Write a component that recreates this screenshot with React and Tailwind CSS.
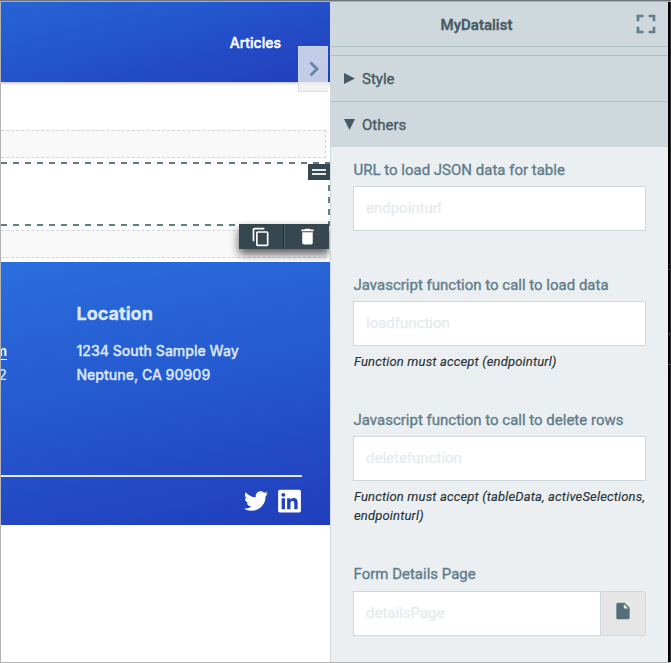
import { FaTwitter, FaLinkedin } from "react-icons/fa";
import {
  MdFullscreen,
  MdDelete,
  MdContentCopy,
  MdInsertDriveFile,
} from "react-icons/md";

const DASH_X =
  "bg-[repeating-linear-gradient(90deg,#607d8b_0_6.5px,transparent_6.5px_12px)]";
const DASH_Y =
  "bg-[repeating-linear-gradient(180deg,#607d8b_0_6px,transparent_6px_12px)]";

function DropZone() {
  return (
    <div className="h-[28px] w-[325px] shrink-0 border border-l-0 border-dashed border-[#d2d6d6] bg-[#f9f9f9]" />
  );
}

function SelectedRow() {
  return (
    <div className="relative mt-1 h-16 shrink-0">
      <div className={`absolute inset-x-0 top-0 h-0.5 ${DASH_X}`} />
      <div className={`absolute inset-x-0 bottom-0 h-0.5 ${DASH_X}`} />
      <div className={`absolute top-[23px] right-0 bottom-0 w-0.5 ${DASH_Y}`} />
      <div className="absolute top-0.5 right-0 flex h-4 w-[22px] flex-col items-center justify-center gap-0.5 bg-[#37474f]">
        <span className="h-0.5 w-3.5 bg-[#e4e8ea]" />
        <span className="h-0.5 w-3.5 bg-[#e4e8ea]" />
      </div>
      <div className="absolute top-[62px] right-px z-10 flex h-[25px] w-[90px] bg-[#37474f] text-white shadow-[0_5px_10px_rgba(0,0,0,0.65)]">
        <div className="flex w-[45px] items-center justify-center border-r border-[#263238]">
          <MdContentCopy className="size-5" />
        </div>
        <div className="flex w-[45px] items-center justify-center border-l border-[#46606a]">
          <MdDelete className="size-[21px]" />
        </div>
      </div>
    </div>
  );
}

function PagePreview() {
  return (
    <div className="relative flex w-[330px] shrink-0 flex-col overflow-hidden border-l border-[#b4b4b4] bg-white font-[Inter,sans-serif]">
      <header className="flex h-20 shrink-0 items-center justify-end bg-[linear-gradient(165deg,#2764d4_0%,#2457cd_38%,#2348c4_72%,#213fbc_100%)] pr-[49px] shadow-[0_1px_3px_rgba(0,0,0,0.3)]">
        <span className="text-[14px] font-medium text-white [-webkit-text-stroke:0.4px]">Articles</span>
      </header>
      <div className="absolute top-11 right-[2px] flex h-[46px] w-[30px] items-center justify-center border border-r-0 border-[#cfd8dc]/70 bg-[#eceff1]/80">
        <svg viewBox="0 0 10 16" className="h-4 w-2.5" fill="none" stroke="#6485a6" strokeWidth="2.8">
          <path d="M1.5 1.500 8 8l-6.500 6.500" />
        </svg>
      </div>
      <div className="mt-12 flex shrink-0 flex-col">
        <DropZone />
        <SelectedRow />
        <div className="mt-1 flex">
          <DropZone />
        </div>
      </div>
      <footer className="mt-1 flex h-[263px] shrink-0 flex-col bg-[linear-gradient(168deg,#2a6edd_0%,#2559cf_48%,#2348c4_78%,#203ebb_100%)] text-[#dfe8f9]">
        <div className="flex h-[213px]">
          <div className="flex w-1.5 flex-col items-end pt-[77px] text-[14px] leading-6">
            <span className="font-semibold text-white underline underline-offset-[3px]">m</span>
            <span className="font-medium">2</span>
          </div>
          <div className="pt-9 pl-[69.5px] text-[14px] leading-6 font-medium tracking-[0.03px] [-webkit-text-stroke:0.3px]">
            <h3 className="mb-[10px] text-[18px] leading-[31px] font-bold">Location</h3>
            <p>1234 South Sample Way</p>
            <p>Neptune, CA 90909</p>
          </div>
        </div>
        <div className="h-0.5 w-[301px] bg-[#e4e9f8]" />
        <div className="flex w-[300px] items-center justify-end gap-[10px] pt-[11px] text-white">
          <FaTwitter className="size-6" />
          <FaLinkedin className="h-[26px] w-[23px]" />
        </div>
      </footer>
    </div>
  );
}

function Label({ children }) {
  return (
    <div className="h-6 pl-[0.5px] text-[15px] leading-6 whitespace-nowrap text-[#607d8b] [-webkit-text-stroke:0.35px]">{children}</div>
  );
}

function Field({ placeholder }) {
  return (
    <input
      placeholder={placeholder}
      className="block h-[45px] w-full min-w-0 border border-[#cfd8dc] bg-white px-3 pb-0.5 text-[15px] text-[#37474f] outline-none placeholder:text-[#e6ebed] placeholder:[-webkit-text-stroke:0.25px]"
    />
  );
}

function Hint({ children }) {
  return (
    <p className="mt-1.5 pl-px text-[13px] leading-[19px] tracking-[0.16px] whitespace-nowrap text-[#263238] italic [-webkit-text-stroke:0.15px]">{children}</p>
  );
}

function Section({ open, children }) {
  return (
    <div className="flex h-[46px] items-center gap-[7px] border-t border-[#b0bec5] bg-[#cfd8dc] pl-[13px] text-[15px] text-[#455a64]">
      <svg viewBox="0 0 11 11" className="size-[11px]" fill="currentColor">
        <path d={open ? "M0 0h11L5.500 11z" : "M0 0v11l11-5.500z"} />
      </svg>
      <span className="pt-px [-webkit-text-stroke:0.35px]">{children}</span>
    </div>
  );
}

function PropertyPanel() {
  return (
    <aside className="flex w-[338px] shrink-0 flex-col border-l border-[#cfd8dc] bg-[#eceff1]">
      <div className="flex h-11 shrink-0 items-center bg-[#cfd8dc] pr-2 text-[#455a64]">
        <h2 className="flex-1 pt-0.5 pr-[8px] text-center text-[15px] font-medium [-webkit-text-stroke:0.4px]">
          MyDatalist
        </h2>
        <MdFullscreen className="-mr-0.5 size-8 shrink-0 text-[#607d8b]" />
      </div>
      <div className="h-[9px] shrink-0 border-t border-[#b0bec5] bg-[#cfd8dc]" />
      <Section>Style</Section>
      <Section open>Others</Section>
      <div className="flex flex-col pt-[11px] pr-[22px] pl-[22px]">
        <div className="flex h-[115px] flex-col gap-1">
          <Label>URL to load JSON data for table</Label>
          <Field placeholder="endpointurl" />
        </div>
        <div className="flex h-[135px] flex-col">
          <Label>Javascript function to call to load data</Label>
          <div className="mt-1"><Field placeholder="loadfunction" /></div>
          <Hint>Function must accept (endpointurl)</Hint>
        </div>
        <div className="flex h-[154px] flex-col">
          <Label>Javascript function to call to delete rows</Label>
          <div className="mt-1"><Field placeholder="deletefunction" /></div>
          <Hint>
            Function must accept (tableData, activeSelections,
            <br />
            endpointurl)
          </Hint>
        </div>
        <Label>Form Details Page</Label>
        <div className="mt-[5px] flex">
          <Field placeholder="detailsPage" />
          <button className="-ml-px flex h-[45px] w-[46px] shrink-0 items-center justify-center rounded-[3px] border border-[#cfd8dc] bg-[#e6e6e6] pr-px pb-[5px] text-[#546e7a]">
            <MdInsertDriveFile className="size-5" />
          </button>
        </div>
      </div>
    </aside>
  );
}

function BackgroundEditor() {
  return (
    <div className="relative w-[3px] shrink-0 overflow-hidden border-r border-[#2d2d2f] bg-black text-[11px] leading-3 text-[#9a9a9a]">
      <span className="absolute top-[259px] left-px">z</span>
      <span className="absolute top-[326px] left-px">e</span>
      <span className="absolute top-[359px] left-px">t</span>
    </div>
  );
}

export default function App() {
  return (
    <div className="flex h-[663px] w-[671px] flex-col overflow-hidden border-b border-[#b4b4b4] bg-white font-[Roboto,sans-serif]">
      <div className="h-px shrink-0 bg-[#6e787c]" />
      <div className="h-px shrink-0 bg-[#a4adb1]" />
      <div className="flex min-h-0 flex-1">
        <PagePreview />
        <PropertyPanel />
        <BackgroundEditor />
      </div>
    </div>
  );
}
